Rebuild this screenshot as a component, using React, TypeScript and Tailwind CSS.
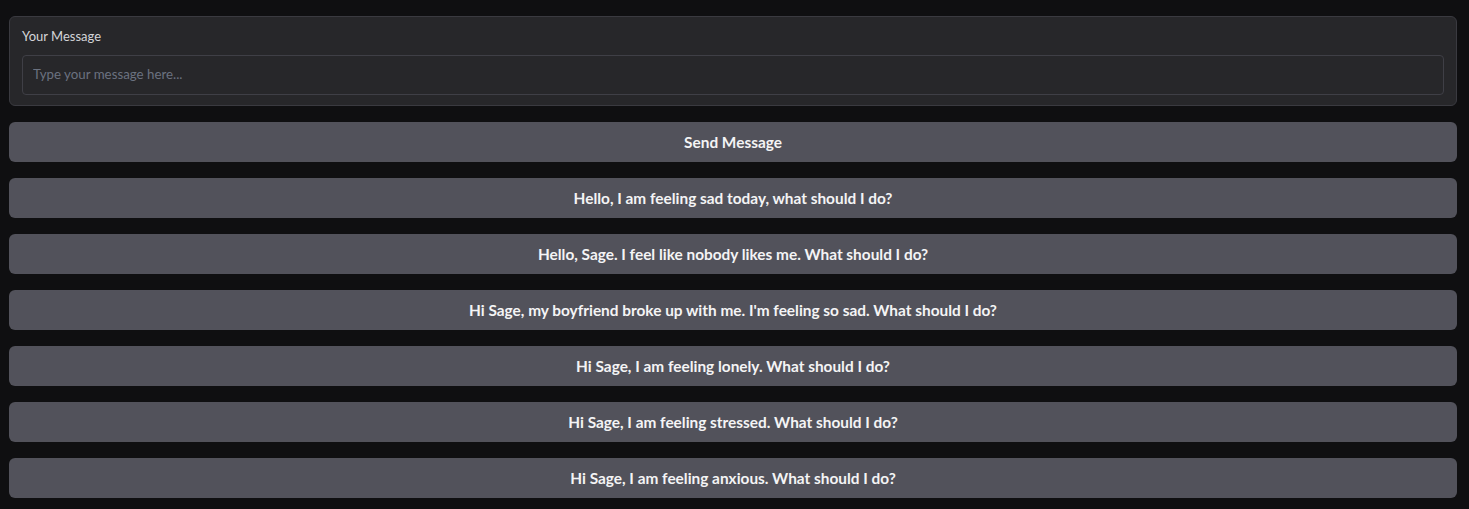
import React from "react";

const prompts = [
  "Hello, I am feeling sad today, what should I do?",
  "Hello, Sage. I feel like nobody likes me. What should I do?",
  "Hi Sage, my boyfriend broke up with me. I'm feeling so sad. What should I do?",
  "Hi Sage, I am feeling lonely. What should I do?",
  "Hi Sage, I am feeling stressed. What should I do?",
  "Hi Sage, I am feeling anxious. What should I do?",
];

function ActionButton({ label }: { label: string }) {
  return (
    <button className="flex h-10 w-full items-center justify-center rounded-md bg-[#52525b] pt-px text-[15.4px] font-bold text-[#f4f4f5]">
      {label}
    </button>
  );
}

export default function App() {
  return (
    <div
      className="min-h-[509px] bg-[#0f0f11] pt-4 pr-3 pb-3 pl-[9px]"
      style={{ fontFamily: '"Source Sans Pro", Lato, "Noto Sans", sans-serif' }}
    >
      <div className="flex flex-col gap-4">
        <div className="rounded-md border border-[#3a3a40] bg-[#27272a] px-3 pt-[10px] pb-[10px]">
          <label className="block text-[13px] leading-[18px] text-[#d4d4d8]">Your Message</label>
          <input
            className="mt-[10px] h-10 w-full rounded-[4px] border border-[#3f3f46] bg-[#27272a] px-[10px] pb-[3px] text-[13.3px] text-[#e4e4e7] placeholder:text-[#6b7280] outline-none"
            placeholder="Type your message here..."
          />
        </div>
        <ActionButton label="Send Message" />
        {prompts.map((p) => (
          <ActionButton key={p} label={p} />
        ))}
      </div>
    </div>
  );
}
